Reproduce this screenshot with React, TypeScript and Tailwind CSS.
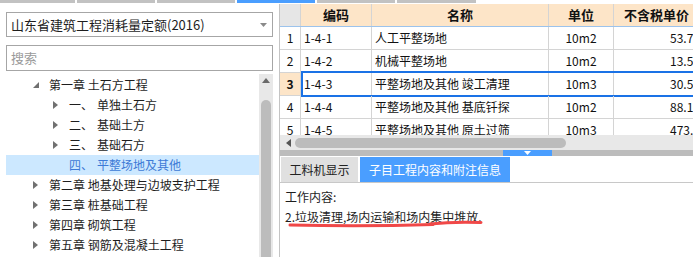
import React from 'react';

type Node = { level: 0 | 1; open?: boolean; num?: string; label: string; selected?: boolean };

const tree: Node[] = [
  { level: 0, open: true, label: '第一章 土石方工程' },
  { level: 1, num: '一、', label: '单独土石方' },
  { level: 1, num: '二、', label: '基础土方' },
  { level: 1, num: '三、', label: '基础石方' },
  { level: 1, num: '四、', label: '平整场地及其他', selected: true },
  { level: 0, label: '第二章 地基处理与边坡支护工程' },
  { level: 0, label: '第三章 桩基础工程' },
  { level: 0, label: '第四章 砌筑工程' },
  { level: 0, label: '第五章 钢筋及混凝土工程' },
];

const rows = [
  { n: '1', code: '1-4-1', name: '人工平整场地', unit: '10m2', price: '53.77' },
  { n: '2', code: '1-4-2', name: '机械平整场地', unit: '10m2', price: '13.55' },
  { n: '3', code: '1-4-3', name: '平整场地及其他 竣工清理', unit: '10m3', price: '30.54', selected: true },
  { n: '4', code: '1-4-4', name: '平整场地及其他 基底钎探', unit: '10m2', price: '88.19' },
  { n: '5', code: '1-4-5', name: '平整场地及其他 原土过筛', unit: '10m3', price: '473.2' },
];

const Collapsed = () => (
  <svg width="5" height="8" viewBox="0 0 5 8" className="shrink-0">
    <path d="M0 0 L5 4 L0 8 Z" fill="#707070" />
  </svg>
);

const Expanded = () => (
  <svg width="6" height="6" viewBox="0 0 6 6" className="shrink-0">
    <path d="M6 0 L6 6 L0 6 Z" fill="#707070" />
  </svg>
);

const TreeRow = ({ node }: { node: Node }) => (
  <div
    className={`h-[20px] flex items-center text-[12px] leading-none ${
      node.selected ? 'bg-[#cce8ff] text-[#3d7ad6]' : 'text-[#1e1e1e]'
    }`}
  >
    {node.level === 0 ? (
      <>
        <div className="w-[27px] shrink-0" />
        <div className="w-[16px] shrink-0 flex items-center">
          {node.open ? <Expanded /> : <Collapsed />}
        </div>
        <span>{node.label}</span>
      </>
    ) : (
      <>
        <div className="w-[47px] shrink-0" />
        <div className="w-[16px] shrink-0 flex items-center">{!node.selected && <Collapsed />}</div>
        <span className="w-[28px] shrink-0">{node.num}</span>
        <span>{node.label}</span>
      </>
    )}
  </div>
);

const cell = 'shrink-0 h-full flex items-center border-r border-[#d4d4d4]';

export default function App() {
  return (
    <div className="w-[693px] h-[257px] overflow-hidden bg-white flex flex-col font-['Noto_Sans_CJK_SC','Noto_Sans',sans-serif]">
      {/* top tab strip */}
      <div className="h-[3px] flex gap-[2px] shrink-0">
        <div className="w-[75px] bg-[#c2c2c2]" />
        <div className="w-[78px] bg-[#c2c2c2]" />
        <div className="w-[78px] bg-[#c2c2c2]" />
        <div className="w-[78px] bg-[#4a9eff]" />
        <div className="w-[78px] bg-[#c2c2c2]" />
        <div className="w-[79px] bg-[#c2c2c2]" />
      </div>

      <div className="flex flex-1 mt-[1px] min-h-0">
        {/* left panel */}
        <div className="w-[279px] shrink-0 flex flex-col px-[6px] pt-[8px]">
          <div className="h-[25px] border border-[#a6a6a6] flex items-center justify-between pl-[4px] pr-[5px] text-[13px] text-[#1e1e1e]">
            <span>山东省建筑工程消耗量定额(2016)</span>
            <svg width="7" height="4" viewBox="0 0 7 4">
              <path d="M0 0 L7 0 L3.5 4 Z" fill="#8a8a8a" />
            </svg>
          </div>
          <div className="h-[26px] mt-[8px] border border-[#a6a6a6] flex items-center pl-[4px] text-[13px] text-[#9a9a9a]">
            搜索
          </div>
          <div className="flex flex-1 mt-[3px] min-h-0">
            <div className="flex-1 pt-[1px]">
              {tree.map((n, i) => (
                <TreeRow key={i} node={n} />
              ))}
            </div>
            <div className="w-[14px] bg-[#e8e8e8] flex flex-col items-center pt-[4px]">
              <svg width="8" height="5" viewBox="0 0 8 5">
                <path d="M0 5 L8 5 L4 0 Z" fill="#6a6a6a" />
              </svg>
              <div className="w-[10px] flex-1 mt-[17px] bg-[#bcbcbc] rounded-t-full" />
            </div>
          </div>
        </div>

        {/* right panel */}
        <div className="flex-1 min-w-0 border-l border-[#c4c4c4] flex flex-col">
          <div className="h-[131px] overflow-hidden shrink-0 text-[12px] text-[#111]">
            <div className="h-[23px] flex border-b border-[#9cc3ec] bg-[#fde5c8] font-bold text-[13px]">
              <div className={`${cell} w-[21px] bg-[#e6e6e6]`} />
              <div className={`${cell} w-[71px] justify-center`}>编码</div>
              <div className={`${cell} w-[177px] justify-center`}>名称</div>
              <div className={`${cell} w-[65px] justify-center`}>单位</div>
              <div className={`${cell} w-[86px] justify-center`}>不含税单价</div>
            </div>
            {rows.map((r) => (
              <div key={r.n} className="relative h-[23px] flex border-b border-[#d4d4d4]">
                <div
                  className={`${cell} w-[21px] justify-center ${
                    r.selected ? 'bg-[#fde5c8] font-bold' : ''
                  }`}
                >
                  {r.n}
                </div>
                <div className={`${cell} w-[71px] pl-[3px]`}>{r.code}</div>
                <div className={`${cell} w-[177px] pl-[3px] whitespace-nowrap`}>{r.name}</div>
                <div className={`${cell} w-[65px] justify-center`}>{r.unit}</div>
                <div className={`${cell} w-[90px] pl-[56px] whitespace-nowrap`}>{r.price}</div>
                {r.selected && (
                  <div className="absolute left-[21px] right-[-10px] top-[-2px] bottom-[-2px] border-2 border-[#1a72e6]" />
                )}
              </div>
            ))}
          </div>

          {/* horizontal scrollbar */}
          <div className="h-[15px] shrink-0 bg-[#e8e8e8] flex items-center">
            <svg width="5" height="8" viewBox="0 0 5 8" className="ml-[6px]">
              <path d="M5 0 L0 4 L5 8 Z" fill="#555" />
            </svg>
            <div className="ml-[4px] w-[271px] h-[10px] rounded-full bg-[#bcbcbc]" />
          </div>

          {/* splitter */}
          <div className="h-[6px] shrink-0 bg-[#bcbcbc] flex">
            <div className="ml-[223px] w-[49px] bg-[#4a9eff] flex justify-center">
              <svg width="7" height="4" viewBox="0 0 7 4" className="mt-[1px]">
                <path d="M0 0 L7 0 L3.5 4 Z" fill="#fff" />
              </svg>
            </div>
          </div>

          {/* tabs */}
          <div className="h-[26px] shrink-0 flex gap-[2px] pl-[1px] pt-[1px] text-[12px]">
            <div className="w-[77px] bg-[#e0e0e0] flex items-center justify-center text-[#222]">工料机显示</div>
            <div className="w-[150px] bg-[#4a9eff] flex items-center justify-center text-white">子目工程内容和附注信息</div>
          </div>

          {/* content */}
          <div className="relative flex-1 border-t border-[#c8c8c8] pl-[5px] pt-[4px] text-[12px] text-[#1e1e1e] leading-[20px]">
            <div>工作内容:</div>
            <div>2.垃圾清理,场内运输和场内集中堆放.</div>
            <svg width="200" height="12" viewBox="0 0 200 12" className="absolute left-[8px] top-[35px]">
              <path d="M2 7 C40 8 100 8 145 6.5" stroke="#f04848" strokeWidth="3" strokeLinecap="round" fill="none" />
              <path d="M142 6 C160 4 180 4 193 4.5" stroke="#f04848" strokeWidth="3" strokeLinecap="round" fill="none" />
            </svg>
          </div>
        </div>
      </div>
    </div>
  );
}
